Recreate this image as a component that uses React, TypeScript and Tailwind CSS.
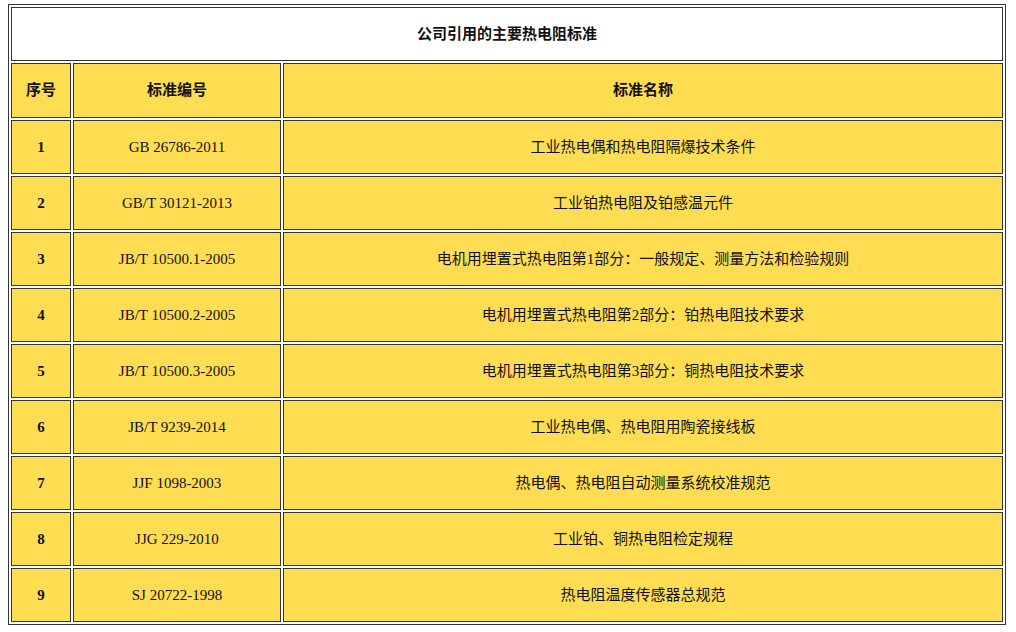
const rows = [
  ["1", "GB 26786-2011", "工业热电偶和热电阻隔爆技术条件"],
  ["2", "GB/T 30121-2013", "工业铂热电阻及铂感温元件"],
  ["3", "JB/T 10500.1-2005", "电机用埋置式热电阻第1部分：一般规定、测量方法和检验规则"],
  ["4", "JB/T 10500.2-2005", "电机用埋置式热电阻第2部分：铂热电阻技术要求"],
  ["5", "JB/T 10500.3-2005", "电机用埋置式热电阻第3部分：铜热电阻技术要求"],
  ["6", "JB/T 9239-2014", "工业热电偶、热电阻用陶瓷接线板"],
  ["7", "JJF 1098-2003", "热电偶、热电阻自动测量系统校准规范"],
  ["8", "JJG 229-2010", "工业铂、铜热电阻检定规程"],
  ["9", "SJ 20722-1998", "热电阻温度传感器总规范"],
];

export default function App() {
  const td = "border border-[#333] bg-[#FEDD52] text-center align-middle p-0";
  return (
    <div className="bg-white w-[1016px] h-[632px] pt-[4px] pl-[8px]" style={{ fontFamily: '"Liberation Serif","Noto Sans CJK SC",serif' }}>
      <table className="w-[998px] border border-[#333] border-separate border-spacing-[2px] text-[15px] text-[#111] table-fixed">
        <colgroup>
          <col className="w-[60px]" />
          <col className="w-[208px]" />
          <col />
        </colgroup>
        <tbody>
          <tr className="h-[54px]">
            <td colSpan={3} className="border border-[#333] bg-white text-center font-bold">公司引用的主要热电阻标准</td>
          </tr>
          <tr className="h-[55px]">
            <td className={td + " font-bold"}>序号</td>
            <td className={td + " font-bold"}>标准编号</td>
            <td className={td + " font-bold"}>标准名称</td>
          </tr>
          {rows.map((r) => (
            <tr key={r[0]} className="h-[54px]">
              <td className={td + " font-bold"}>{r[0]}</td>
              <td className={td}>{r[1]}</td>
              <td className={td}>{r[2]}</td>
            </tr>
          ))}
        </tbody>
      </table>
    </div>
  );
}
